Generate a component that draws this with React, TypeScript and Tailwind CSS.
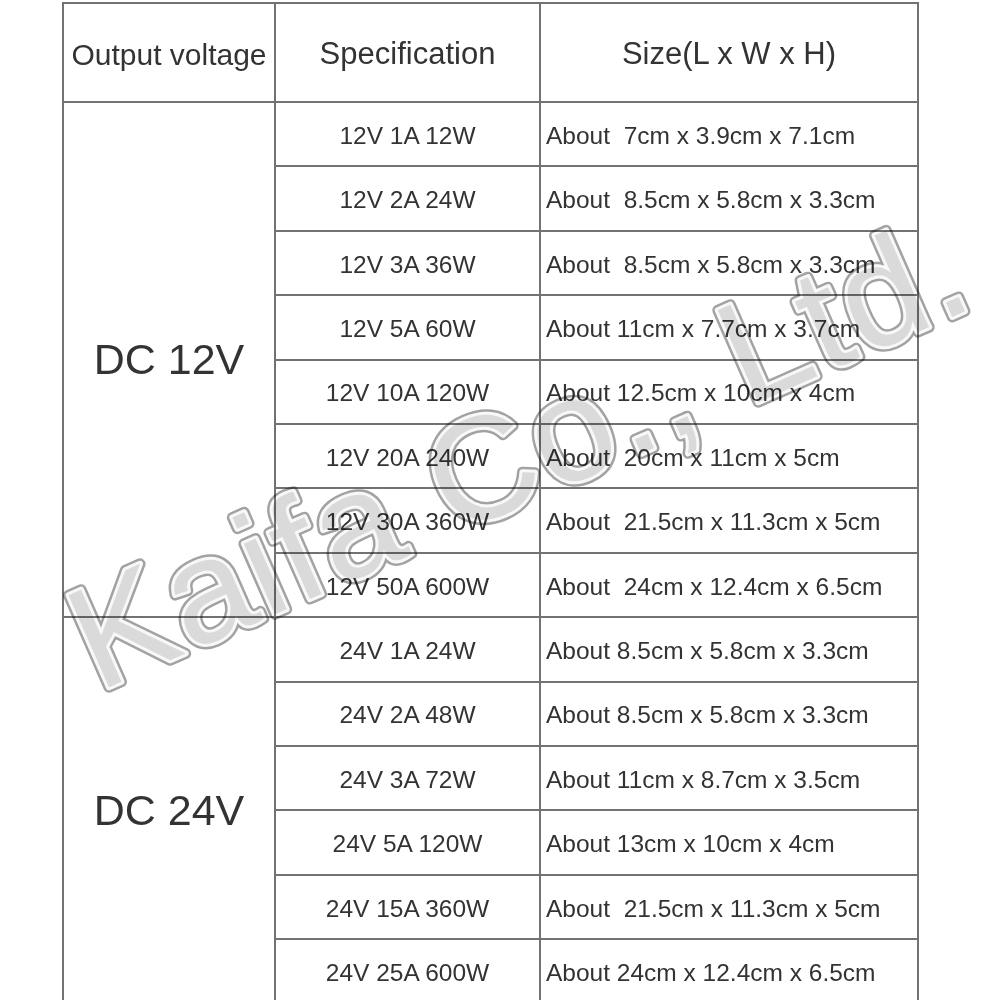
import React from "react";

type Row = { spec: string; size: string };

const groups: { label: string; rows: Row[] }[] = [
  {
    label: "DC 12V",
    rows: [
      { spec: "12V 1A 12W", size: "About  7cm x 3.9cm x 7.1cm" },
      { spec: "12V 2A 24W", size: "About  8.5cm x 5.8cm x 3.3cm" },
      { spec: "12V 3A 36W", size: "About  8.5cm x 5.8cm x 3.3cm" },
      { spec: "12V 5A 60W", size: "About 11cm x 7.7cm x 3.7cm" },
      { spec: "12V 10A 120W", size: "About 12.5cm x 10cm x 4cm" },
      { spec: "12V 20A 240W", size: "About  20cm x 11cm x 5cm" },
      { spec: "12V 30A 360W", size: "About  21.5cm x 11.3cm x 5cm" },
      { spec: "12V 50A 600W", size: "About  24cm x 12.4cm x 6.5cm" },
    ],
  },
  {
    label: "DC 24V",
    rows: [
      { spec: "24V 1A 24W", size: "About 8.5cm x 5.8cm x 3.3cm" },
      { spec: "24V 2A 48W", size: "About 8.5cm x 5.8cm x 3.3cm" },
      { spec: "24V 3A 72W", size: "About 11cm x 8.7cm x 3.5cm" },
      { spec: "24V 5A 120W", size: "About 13cm x 10cm x 4cm" },
      { spec: "24V 15A 360W", size: "About  21.5cm x 11.3cm x 5cm" },
      { spec: "24V 25A 600W", size: "About 24cm x 12.4cm x 6.5cm" },
    ],
  },
];

const cell = "border-r-2 border-b-2 border-[#727272] flex items-center";

const Watermark = () => {
  const common = {
    x: 98,
    y: 692,
    transform: "rotate(-23.7 98 692)",
    fontSize: 146,
    fontFamily: "'Liberation Sans', Arial, sans-serif",
    strokeLinejoin: "round" as const,
    letterSpacing: 2.5,
  };
  const text = "Kaifa Co., Ltd.";
  return (
    <svg
      className="absolute inset-0 pointer-events-none mix-blend-multiply"
      width={1000}
      height={1000}
      viewBox="0 0 1000 1000"
    >
      <text {...common} fill="none" stroke="#a2a2a2" strokeWidth={11}>
        {text}
      </text>
      <text {...common} fill="none" stroke="#f8f8f8" strokeWidth={6}>
        {text}
      </text>
      <text {...common} fill="#dadada">
        {text}
      </text>
    </svg>
  );
};

export default function App() {
  return (
    <div
      className="relative w-[1000px] h-[1000px] overflow-hidden bg-white text-[#333]"
      style={{ fontFamily: "'Liberation Sans', Arial, sans-serif" }}
    >
      <div className="pt-[2px] pl-[62px]">
        <div className="grid grid-cols-[212px_265px_378px] grid-rows-[99px_repeat(14,64.4px)] border-l-2 border-t-2 border-[#727272] w-max">
          <div className={`${cell} justify-center text-[30px] pt-[3px]`}>Output voltage</div>
          <div className={`${cell} justify-center text-[31px] pt-[3px]`}>Specification</div>
          <div className={`${cell} justify-center text-[31px] pt-[3px]`}>Size(L x W x H)</div>

          {groups.map((g, gi) => (
            <React.Fragment key={g.label}>
              <div
                className={`${cell} justify-center text-[43px] col-start-1 ${
                  gi === 0 ? "row-start-2 row-span-8" : "row-start-10 row-span-6"
                }`}
              >
                {g.label}
              </div>
              {g.rows.map((r) => (
                <React.Fragment key={r.spec}>
                  <div className={`${cell} col-start-2 justify-center text-[24.5px] pt-[4px]`}>
                    {r.spec}
                  </div>
                  <div className={`${cell} col-start-3 pl-[5px] text-[24.5px] pt-[4px] whitespace-pre`}>
                    {r.size}
                  </div>
                </React.Fragment>
              ))}
            </React.Fragment>
          ))}
        </div>
      </div>
      <Watermark />
    </div>
  );
}
